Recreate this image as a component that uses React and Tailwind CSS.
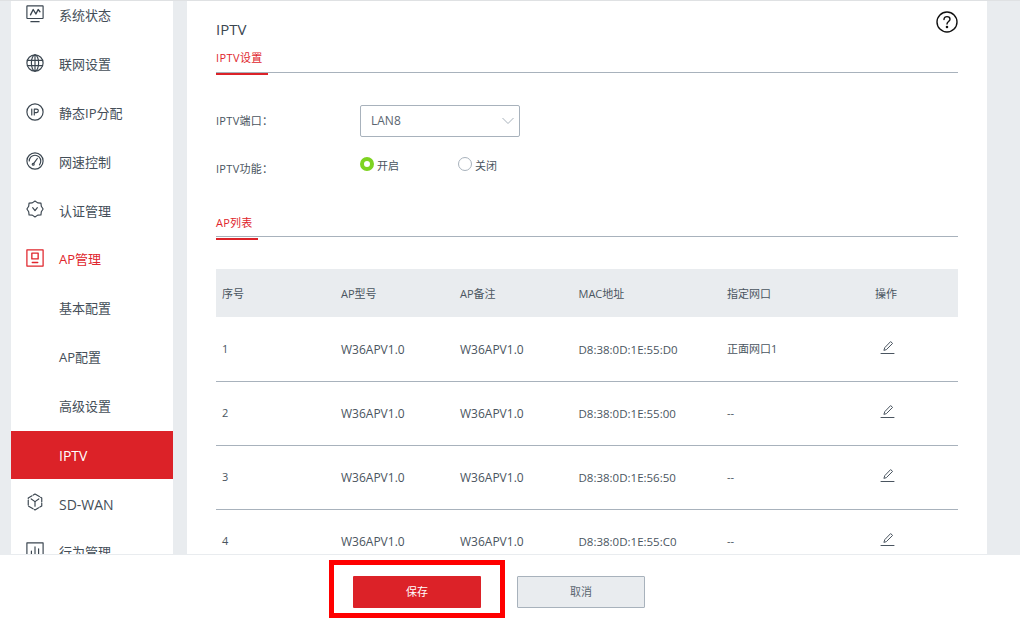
const ink = "#3b4650";

function Ic({ children, color = ink }) {
  return (
    <svg width="18" height="18" viewBox="0 0 20 20" fill="none" stroke={color} strokeWidth="1.3" strokeLinecap="round" strokeLinejoin="round">
      {children}
    </svg>
  );
}

const icons = {
  status: (
    <Ic>
      <rect x="1" y="1" width="18" height="14" rx="0.5" />
      <path d="M5 11 L8 5 L11 10 L13.5 5 L15.5 7.5" strokeWidth="1.5" />
      <path d="M5.5 18.5 H14.5" strokeWidth="1.5" />
    </Ic>
  ),
  net: (
    <Ic>
      <circle cx="10" cy="10" r="9" />
      <ellipse cx="10" cy="10" rx="4" ry="9" />
      <path d="M1.6 7 H18.4 M1.6 13 H18.4 M10 1 V19" />
    </Ic>
  ),
  ip: (
    <Ic>
      <circle cx="10" cy="10" r="9" />
      <path d="M6.4 6.8 V13.2 M9.2 13.2 V6.8 H11.8 A1.9 1.9 0 0 1 11.8 10.6 H9.2" />
    </Ic>
  ),
  speed: (
    <Ic>
      <circle cx="10" cy="10" r="9" />
      <path d="M3.6 10 A6.4 6.4 0 0 1 16.4 10 C16.4 11.6 15.9 13 15 14.2" />
      <path d="M8.4 13 L12.6 7.2" />
      <circle cx="8" cy="13.6" r="1.1" />
    </Ic>
  ),
  auth: (
    <Ic>
      <path d="M10 1.2 L13 3.2 L16.6 3.4 L17 7 L19 10 L17 13 L16.6 16.6 L13 16.8 L10 18.8 L7 16.8 L3.4 16.6 L3 13 L1 10 L3 7 L3.4 3.4 L7 3.2 Z" />
      <path d="M7.4 8.6 L10 11.8 L12.6 8.6" />
    </Ic>
  ),
  ap: (
    <Ic color="#e0262d">
      <rect x="1" y="1" width="18" height="18" strokeWidth="1.4" />
      <rect x="6.5" y="4.5" width="7" height="6.5" strokeWidth="1.5" />
      <path d="M7 15 H13" strokeWidth="1.6" />
    </Ic>
  ),
  sdwan: (
    <Ic>
      <path d="M10 1.2 L17.5 5.5 V14.5 L10 18.8 L2.5 14.5 V5.5 Z" strokeDasharray="5.6 1.6" />
      <path d="M5.8 6.6 L10 9.6 L14.2 6.6 M10 9.6 V14.6" />
    </Ic>
  ),
  action: (
    <Ic>
      <rect x="1" y="1" width="18" height="17" />
      <path d="M6 15 V10 M10 15 V5.5 M14 15 V7.5" />
    </Ic>
  ),
};

const menu = [
  { label: "系统状态", icon: "status" },
  { label: "联网设置", icon: "net" },
  { label: "静态IP分配", icon: "ip" },
  { label: "网速控制", icon: "speed" },
  { label: "认证管理", icon: "auth" },
  { label: "AP管理", icon: "ap", red: true },
  { label: "基本配置" },
  { label: "AP配置" },
  { label: "高级设置" },
  { label: "IPTV", active: true, big: true },
  { label: "SD-WAN", icon: "sdwan", big: true },
  { label: "行为管理", icon: "action" },
];

const rows = [
  ["1", "W36APV1.0", "W36APV1.0", "D8:38:0D:1E:55:D0", "正面网口1"],
  ["2", "W36APV1.0", "W36APV1.0", "D8:38:0D:1E:55:00", "--"],
  ["3", "W36APV1.0", "W36APV1.0", "D8:38:0D:1E:56:50", "--"],
  ["4", "W36APV1.0", "W36APV1.0", "D8:38:0D:1E:55:C0", "--"],
];

const cols = "grid grid-cols-[119px_119px_118.5px_148.5px_148px_1fr] pl-[6px] items-center";

const cellSize = ["text-[11px]", "text-[12px]", "text-[12px]", "text-[11.5px]", "text-[11px]"];

function Pencil() {
  return (
    <svg width="15" height="15" viewBox="0 0 15 15" fill="none" stroke="#4a5560" strokeWidth="1" strokeLinejoin="round" strokeLinecap="round">
      <path d="M4 10 L4.8 7.6 L10.6 1.6 L12.6 3.4 L6.6 9.4 Z" />
      <path d="M1 13.5 H14" />
    </svg>
  );
}

export default function App() {
  return (
    <div className="w-[1020px] h-[621px] flex flex-col overflow-hidden bg-[#e9ecef] font-['Open_Sans','Noto_Sans_CJK_SC',sans-serif] text-[#4a5560]">
      <div className="flex-1 min-h-0 flex pl-[11px] gap-[14px] border-t border-[#dfe1e3] overflow-hidden">
        <nav className="w-[162px] bg-white overflow-hidden">
          <div className="-mt-[10px]">
            {menu.map((m) => (
              <div
                key={m.label}
                className={`h-[48.85px] flex items-center pt-[1px] pl-[48px] relative ${m.big ? "text-[14px]" : "text-[13px]"} ${
                  m.active ? "bg-[#dc2228] text-white" : m.red ? "text-[#e0262d]" : "text-[#444e58]"
                }`}
              >
                {m.icon && <span className="absolute left-[15px] top-[14px]">{icons[m.icon]}</span>}
                {m.label}
              </div>
            ))}
          </div>
        </nav>

        <main className="w-[800px] bg-white pl-[29px] pr-[29px] overflow-hidden relative">
          <h1 className="text-[15px] leading-[20px] font-normal mt-[18px] text-[#3b4650]">IPTV</h1>
          <svg className="absolute right-[29px] top-[10px]" width="22" height="22" viewBox="0 0 22 22" fill="none" stroke="#111" strokeWidth="1.4">
            <circle cx="11" cy="11" r="10" />
            <path d="M8 8.6 C8 6.6 9.4 5.6 11 5.6 C12.7 5.6 14 6.7 14 8.2 C14 10.4 11 10.6 11 13" strokeLinecap="round" />
            <circle cx="11" cy="16" r="0.6" fill="#111" />
          </svg>

          <div className="mt-[5px] border-b border-[#a8b2bc] h-[29px]">
            <span className="inline-block h-[29px] pt-[2px] leading-[20px] text-[11px] tracking-[0.4px] text-[#e0262d] border-b-2 border-[#dc2228] pr-[5px]">IPTV设置</span>
          </div>

          <div className="mt-[32px] flex items-center h-[32px] text-[11px]">
            <span className="w-[144px] tracking-[0.3px]">IPTV端口：</span>
            <div className="w-[160px] h-[32px] border border-[#a8b2bc] rounded-[2px] flex items-center justify-between pl-[10px] pr-[4px] text-[#5a6570]">
              <span className="text-[12px] -mt-[1px]">LAN8</span>
              <svg width="14" height="8" viewBox="0 0 14 8" fill="none" stroke="#a8b2bc" strokeWidth="1">
                <path d="M1.5 1 L7 6.5 L12.5 1" />
              </svg>
            </div>
          </div>

          <div className="mt-[16px] flex items-start h-[32px] text-[11px]">
            <span className="w-[144px] leading-[32px] tracking-[0.3px]">IPTV功能：</span>
            <div className="flex items-center h-[16px] mt-[3px]">
              <span className="w-[14px] h-[14px] rounded-full border-[4px] border-[#7ed321] bg-white"></span>
              <span className="ml-[3px] w-[81px] pt-[4px]">开启</span>
              <span className="w-[14px] h-[14px] rounded-full border border-[#a8b2bc] bg-white"></span>
              <span className="ml-[3px] pt-[4px]">关闭</span>
            </div>
          </div>

          <div className="mt-[24px] border-b border-[#a8b2bc] h-[28px]">
            <span className="inline-block h-[28px] pt-[1px] leading-[20px] text-[11px] tracking-[0.2px] text-[#e0262d] border-b-2 border-[#dc2228] pr-[6px]">AP列表</span>
          </div>

          <div className={`${cols} mt-[32px] h-[48px] pt-[3px] bg-[#e9ecef] text-[11px]`}>
            {["序号", "AP型号", "AP备注", "MAC地址", "指定网口", "操作"].map((h) => (
              <span key={h}>{h}</span>
            ))}
          </div>
          <div className="pt-[1px]">
            {rows.map((r) => (
              <div key={r[0]} className={`${cols} h-[64px] border-b border-[#a8b2bc]`}>
                {r.map((c, i) => (
                  <span key={i} className={cellSize[i]}>{c}</span>
                ))}
                <span className="pl-[5px] -mt-[5px]"><Pencil /></span>
              </div>
            ))}
          </div>
        </main>
      </div>

      <footer className="h-[67px] shrink-0 bg-white border-t border-[#e9ecef] flex items-start pl-[329px] pt-[5px]">
        <div className="border-[5px] border-[#ff0000] px-[19px] pt-[11px] pb-[5px]">
          <button className="block w-[128px] h-[32px] bg-[#dc2228] text-white text-[11px] rounded-[1px]">保存</button>
        </div>
        <button className="ml-[12px] mt-[16px] w-[128px] h-[32px] bg-[#e9ecef] border border-[#a8b2bc] text-[#5a6570] text-[11px] rounded-[1px]">取消</button>
      </footer>
    </div>
  );
}
